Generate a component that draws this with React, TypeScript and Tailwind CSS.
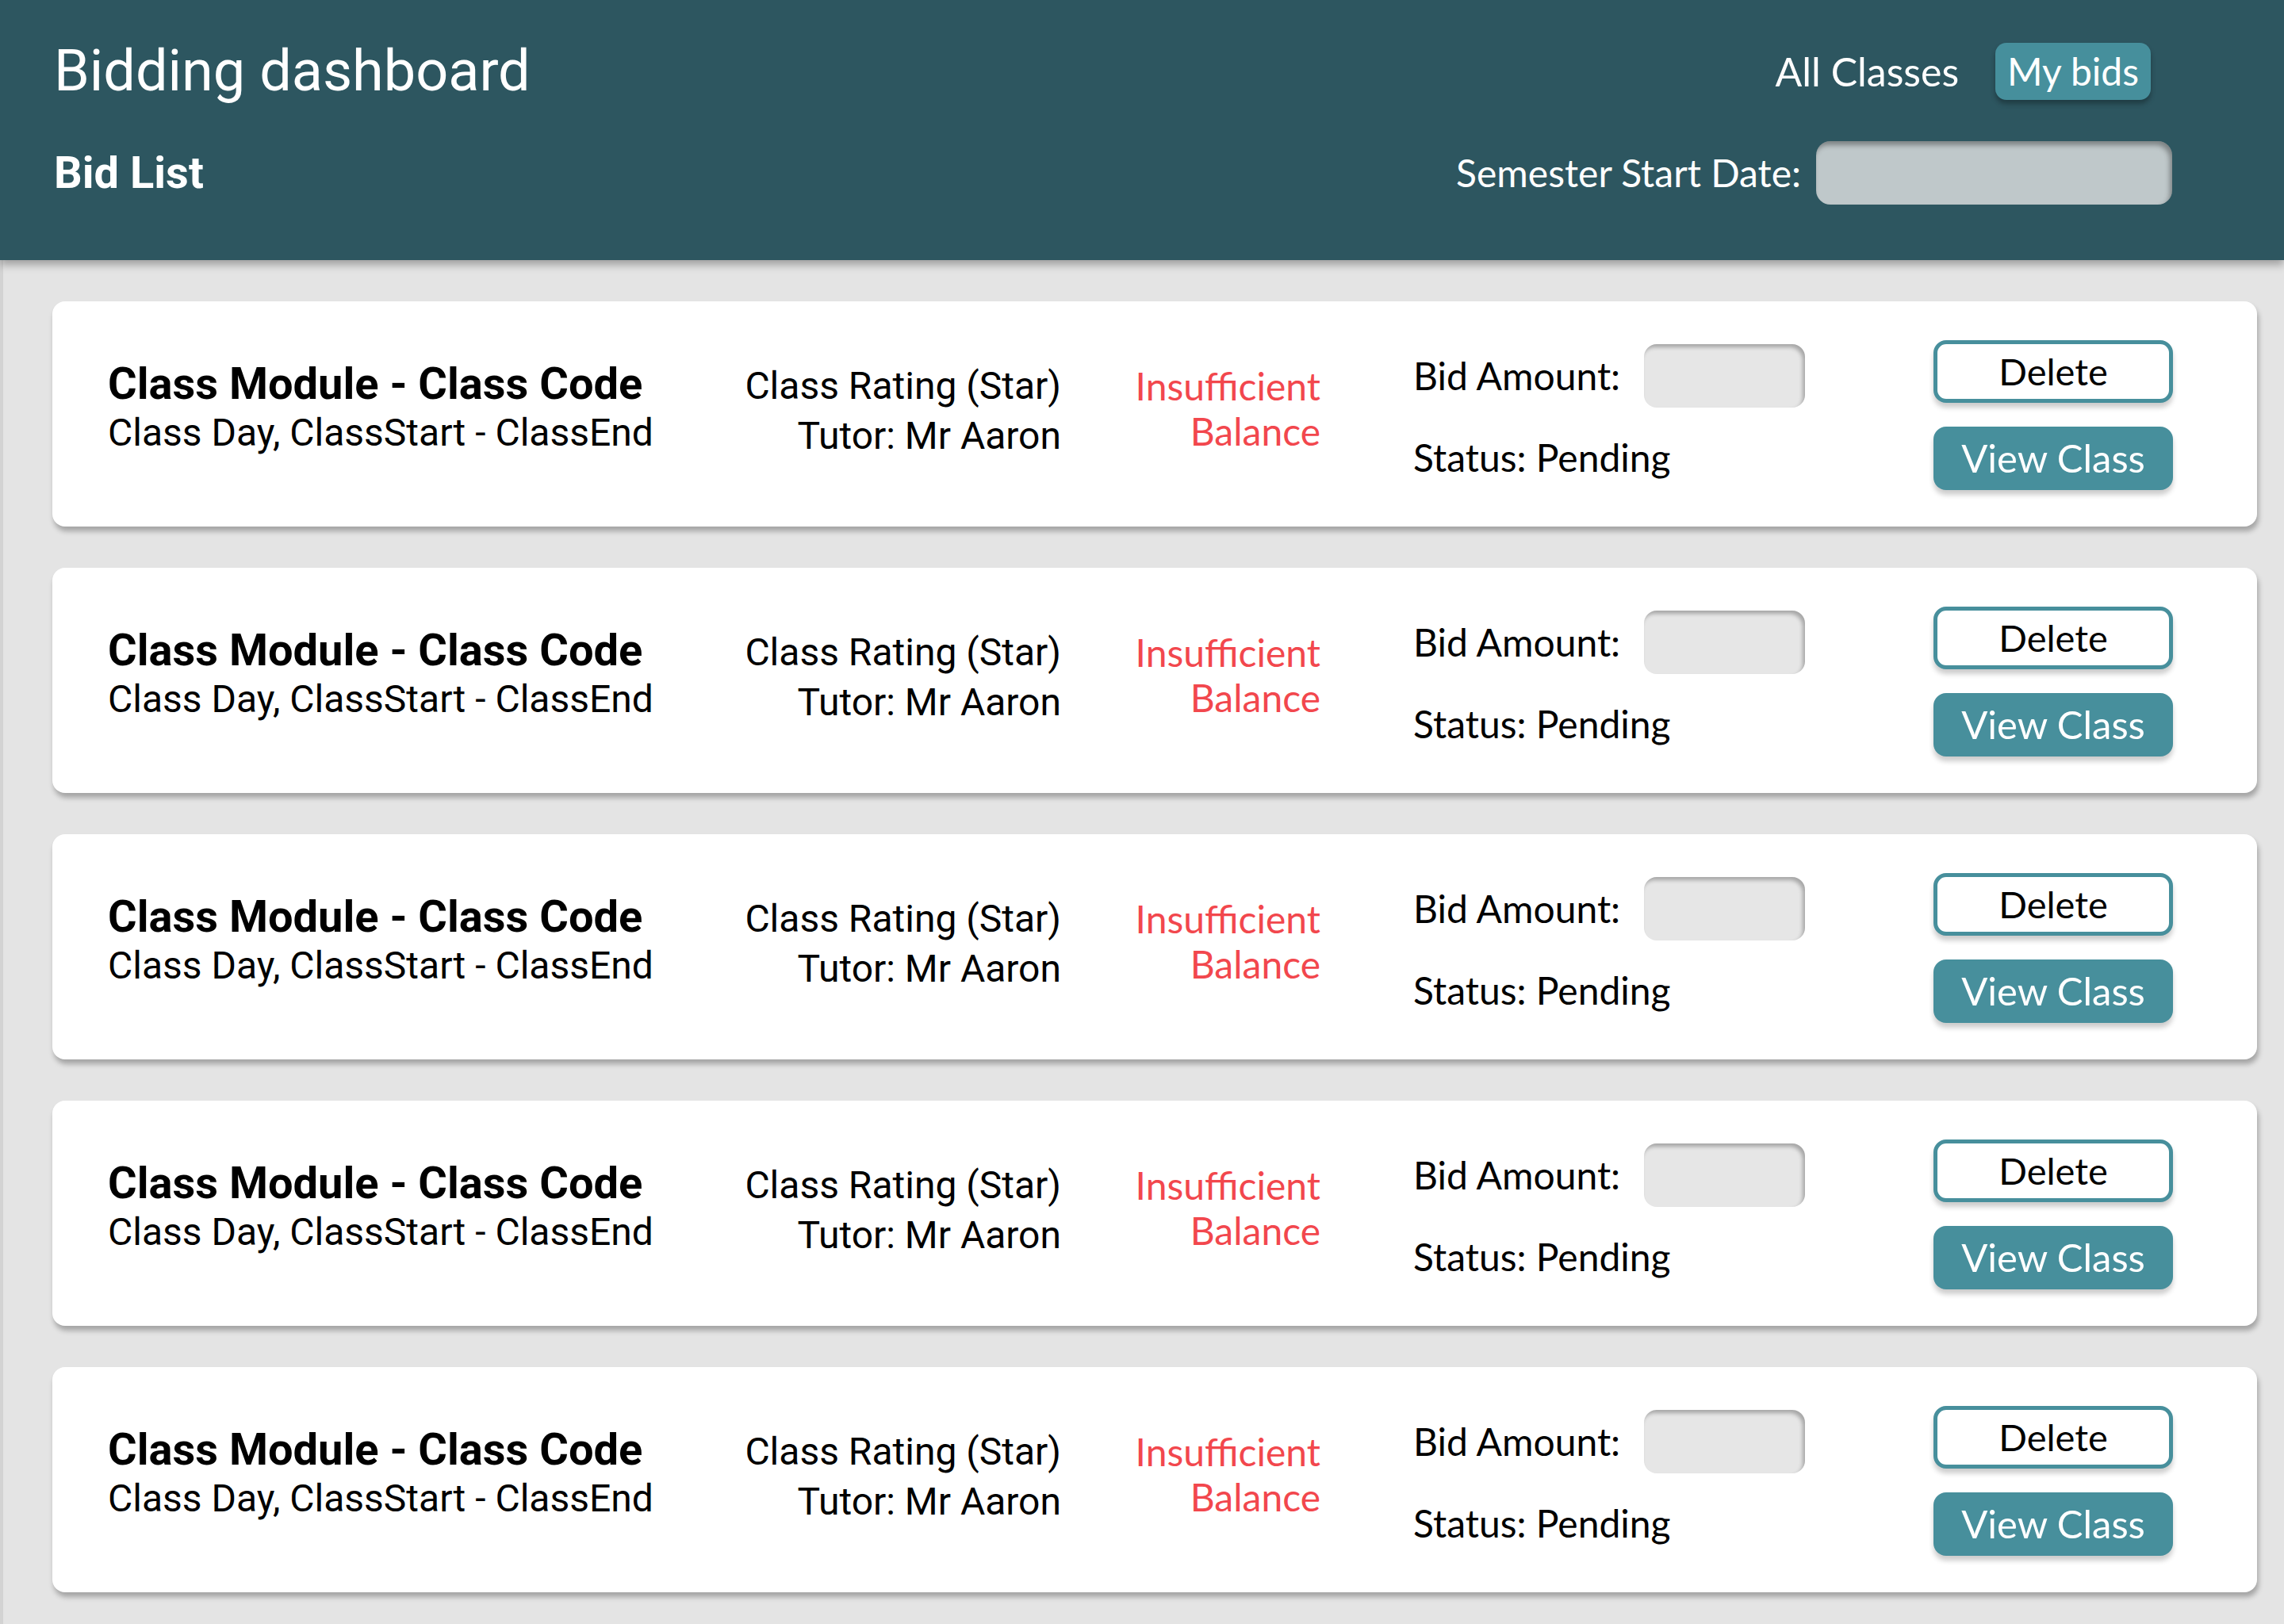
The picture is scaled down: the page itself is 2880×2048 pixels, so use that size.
const roboto = "font-['Roboto',sans-serif]";
const lato = "font-['Lato',sans-serif]";

function BidCard() {
  return (
    <div className="flex h-[284px] items-start rounded-[16px] bg-white pl-[70px] shadow-[2px_6px_6px_rgba(0,0,0,0.28)]">
      <div className={`${roboto} mt-[73px] w-[680px] whitespace-nowrap text-black`}>
        <div className="text-[56px] font-bold leading-[62px]">Class Module - Class Code</div>
        <div className="text-[48px] leading-[61px]">Class Day, ClassStart - ClassEnd</div>
      </div>
      <div className={`${roboto} mt-[75px] w-[522px] text-right text-[48px] leading-[63px] text-black`}>
        <div>Class Rating (Star)</div>
        <div>Tutor: Mr Aaron</div>
      </div>
      <div className={`${lato} mt-[78px] w-[327px] text-right text-[48px] leading-[57px] text-[#f2474d]`}>
        <div>Insufficient</div>
        <div>Balance</div>
      </div>
      <div className={`${lato} ml-[117px] mt-[54px] w-[656px] text-[48px] text-black`}>
        <div className="flex h-[80px] items-center gap-[30px]">
          <span>Bid Amount:</span>
          <div className="h-[80px] w-[203px] rounded-[16px] bg-[#e6e6e6] shadow-[inset_-3px_4px_5px_rgba(0,0,0,0.28)]" />
        </div>
        <div className="mt-[35px] leading-[56px]">Status: Pending</div>
      </div>
      <div className={`${lato} mt-[49px] flex w-[302px] flex-col gap-[30px]`}>
        <button className="flex h-[79px] items-center justify-center rounded-[16px] border-[5px] border-[#478f9c] bg-white text-[47px] text-black shadow-[0_6px_6px_rgba(0,0,0,0.2)]">
          Delete
        </button>
        <button className="flex h-[80px] items-center justify-center rounded-[16px] bg-[#478f9c] text-[49px] text-white shadow-[0_6px_6px_rgba(0,0,0,0.2)]">
          View Class
        </button>
      </div>
    </div>
  );
}

export default function App() {
  return (
    <div className="flex min-h-[2048px] w-[2880px] flex-col bg-[#e4e4e4]">
      <header className="relative z-10 h-[328px] bg-[#2d5660] pl-[68px] pr-[141px] pt-[49px] text-white shadow-[0_6px_10px_rgba(0,0,0,0.3)]">
        <div className="flex h-[82px] items-center justify-between">
          <h1 className={`${roboto} text-[72px] leading-[82px]`}>Bidding dashboard</h1>
          <nav className={`${lato} mr-[27px] flex items-center gap-[46px]`}>
            <span className="text-[50px]">All Classes</span>
            <span className="flex h-[72px] items-center rounded-[14px] bg-[#468f9c] px-[15px] text-[48px] shadow-[0_5px_6px_rgba(0,0,0,0.3)]">
              My bids
            </span>
          </nav>
        </div>
        <div className="mt-[47px] flex h-[80px] items-center justify-between">
          <h2 className={`${roboto} text-[56px] font-bold`}>Bid List</h2>
          <div className={`${lato} flex items-center gap-[19px] text-[48px]`}>
            <span>Semester Start Date:</span>
            <div className="h-[80px] w-[449px] rounded-[18px] bg-[#bfc8ca] shadow-[inset_-3px_5px_6px_rgba(0,0,0,0.35)]" />
          </div>
        </div>
      </header>
      <main className="flex flex-1 flex-col gap-[52px] border-l-[4px] border-[#d3d3d3] pb-[40px] pl-[62px] pr-[34px] pt-[52px]">
        <BidCard />
        <BidCard />
        <BidCard />
        <BidCard />
        <BidCard />
      </main>
    </div>
  );
}
